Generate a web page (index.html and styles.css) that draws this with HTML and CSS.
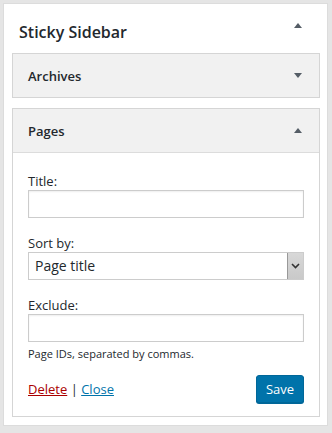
FILE: index.html
```html
<!DOCTYPE html>
<html>
<head>
<meta charset="utf-8">
<link rel="stylesheet" href="styles.css">
</head>
<body>
<div class="sidebar">
  <div class="sidebar-head">
    <h2 class="sidebar-title">Sticky Sidebar</h2>
    <span class="arrow up"></span>
  </div>
  <div class="widget">
    <div class="widget-head">
      <span class="widget-title">Archives</span>
      <span class="arrow down"></span>
    </div>
  </div>
  <div class="widget open">
    <div class="widget-head">
      <span class="widget-title">Pages</span>
      <span class="arrow up"></span>
    </div>
    <div class="widget-body">
      <label class="field-label">Title:</label>
      <div class="text-input"></div>
      <label class="field-label gap">Sort by:</label>
      <div class="select">
        <span class="select-value">Page title</span>
        <span class="select-btn">
          <svg width="9" height="6" viewBox="0 0 9 6"><path d="M1 1 L4.5 4.5 L8 1" fill="none" stroke="#333" stroke-width="1.6"/></svg>
        </span>
      </div>
      <label class="field-label gap">Exclude:</label>
      <div class="text-input"></div>
      <p class="help">Page IDs, separated by commas.</p>
      <div class="actions">
        <div class="links"><a class="delete" href="#">Delete</a> | <a class="close" href="#">Close</a></div>
        <button class="save">Save</button>
      </div>
    </div>
  </div>
</div>
</body>
</html>
```
FILE: styles.css
```css
html, body {
  margin: 0;
  padding: 0;
  background: #e5e5e5;
}
body {
  font-family: "Open Sans", "Noto Sans", sans-serif;
  color: #23282d;
  padding: 3px 4px 0 3px;
}
.sidebar {
  background: #fff;
  border: 1px solid #dcdcdc;
  width: 308px;
  padding: 0 7px 8px 8px;
  display: flex;
  flex-direction: column;
  gap: 10px;
}
.sidebar-head {
  height: 49px;
  display: flex;
  align-items: center;
  justify-content: space-between;
  padding: 0 18px 0 7px;
  margin-bottom: -10px;
}
.sidebar-title {
  margin: 0;
  font-size: 16px;
  font-weight: 600;
  position: relative;
  top: 3px;
}
.arrow {
  width: 0;
  height: 0;
  border-left: 4px solid transparent;
  border-right: 4px solid transparent;
}
.arrow.up { border-bottom: 5px solid #555d66; }
.arrow.down { border-top: 5px solid #555d66; }
.sidebar-head .arrow { position: relative; top: -3px; }
.widget {
  border: 1px solid #d5d5d5;
  background: #fff;
}
.widget-head {
  height: 43px;
  background: #f1f1f1;
  display: flex;
  align-items: center;
  justify-content: space-between;
  padding: 0 17px 0 15px;
}
.widget-title {
  font-size: 13px;
  font-weight: 600;
}
.open .widget-head {
  border-bottom: 1px solid #dcdcdc;
}
.widget-body {
  display: flex;
  flex-direction: column;
  padding: 19px 15px 13px 15px;
}
.field-label {
  font-size: 13px;
  line-height: 18px;
  height: 17px;
}
.field-label.gap {
  margin-top: 16px;
}
.text-input {
  height: 26px;
  border: 1px solid #ccc;
  box-shadow: inset 0 1px 2px rgba(0,0,0,0.07);
  background: #fff;
  margin-top: 1px;
}
.select {
  height: 26px;
  border: 1px solid #ccc;
  margin-top: 1px;
  display: flex;
  align-items: stretch;
  justify-content: space-between;
}
.select-value {
  font-size: 14px;
  line-height: 26px;
  padding-left: 6px;
}
.select-btn {
  width: 15px;
  background: linear-gradient(#d8d8d8, #c9c9c9);
  border-left: 1px solid #999;
  display: flex;
  align-items: center;
  justify-content: center;
}
.help {
  margin: 4px 0 0 0;
  font-size: 11px;
  line-height: 16px;
}
.actions {
  margin-top: 13px;
  display: flex;
  align-items: center;
  justify-content: space-between;
}
.links {
  font-size: 13px;
}
.links a { text-decoration: underline; }
.delete { color: #a00; }
.close { color: #0073aa; }
.save {
  width: 48px;
  height: 28px;
  background: #0073aa;
  border: 1px solid #006799;
  border-radius: 3px;
  color: #fff;
  font-family: "Open Sans", "Noto Sans", sans-serif;
  font-size: 13px;
  padding: 0;
  box-shadow: 0 1px 0 #006799;
}
```
